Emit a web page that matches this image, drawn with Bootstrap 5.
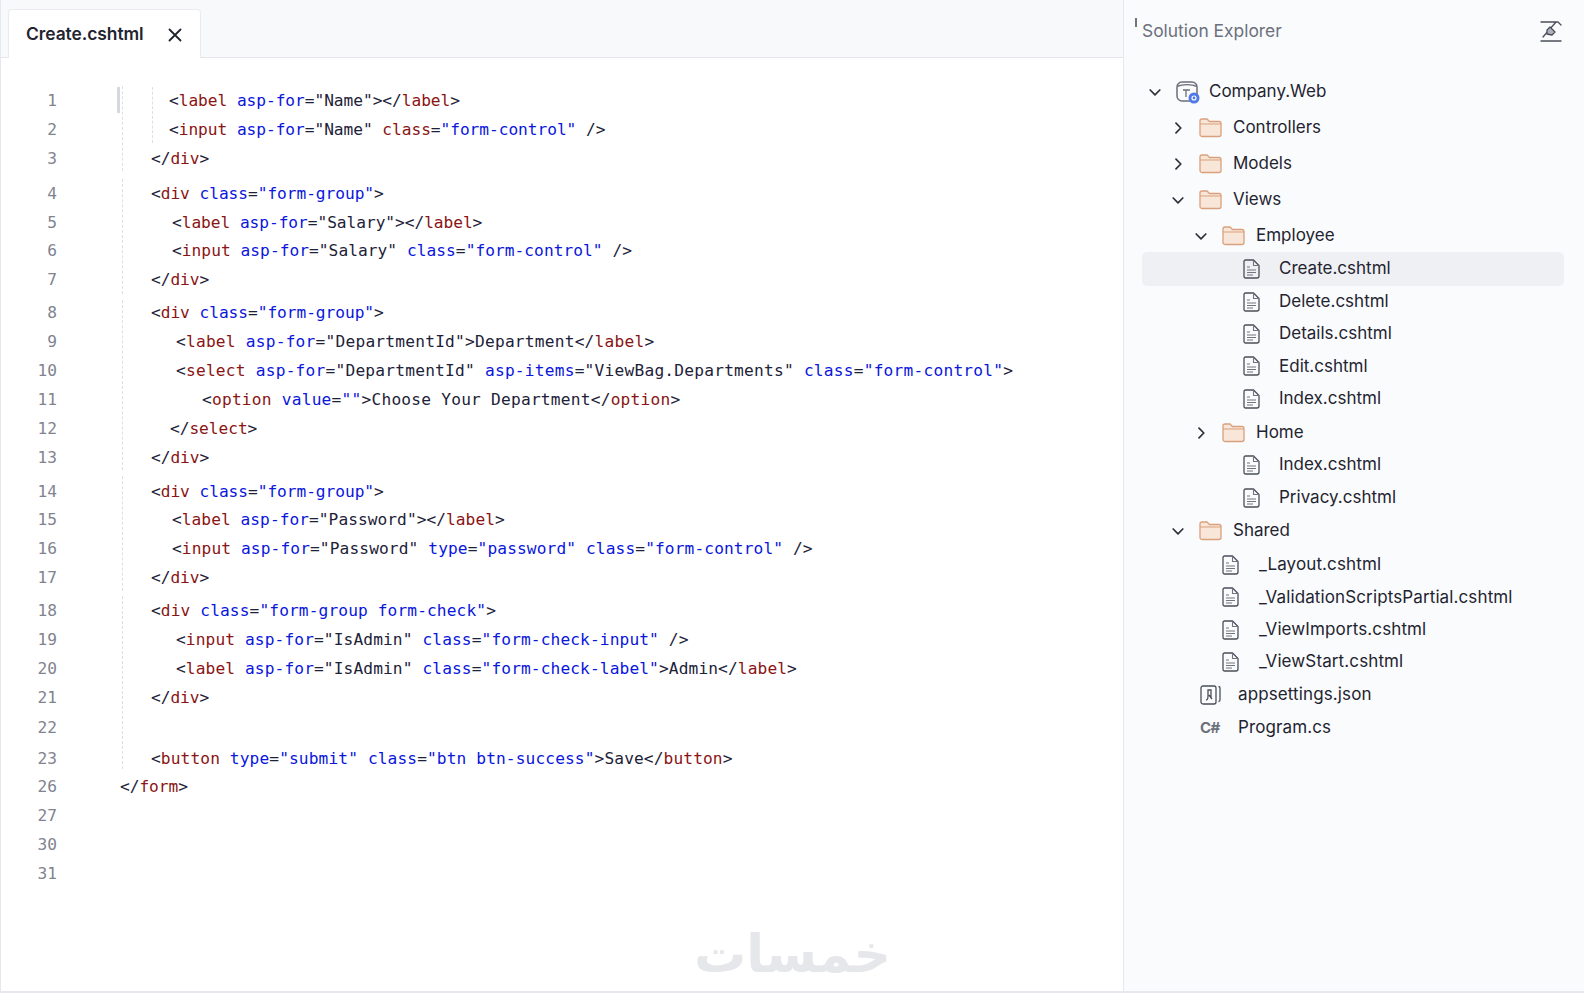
<!DOCTYPE html>
<html lang="en">
<head>
    <meta charset="UTF-8">
    <meta name="viewport" content="width=device-width, initial-scale=1.0">
    <title>Create.cshtml</title>
    <link href="https://cdn.jsdelivr.net/npm/bootstrap@5.3.0/dist/css/bootstrap.min.css" rel="stylesheet">
    <script src="https://cdn.jsdelivr.net/npm/bootstrap@5.3.0/dist/js/bootstrap.bundle.min.js"></script>
    <style>
        html, body { height: 100%; }
        body { background: #fff; font-family: Inter, "Liberation Sans", sans-serif; color: #1f2430; overflow: hidden; }
        .ide { height: 993px; border-left: 1px solid #e6e8ee; border-bottom: 2px solid #e6e8ee; }
        .editor-pane { width: 1122px; position: relative; }
        .tab-strip { height: 58px; background: #f8f9fb; border-bottom: 1px solid #e4e6ec; padding: 9px 0 0 7px; }
        .file-tab { width: 193px; height: 49px; background: #fff; border: 1px solid #e9ebf0; border-bottom: 0; border-radius: 4px 4px 0 0; padding: 1px 18px 0 17px; font-size: 17.4px; font-weight: 600; letter-spacing: -.05px; }
        .code-area { padding-top: 29px; position: relative; font-family: "DejaVu Sans Mono", "Liberation Mono", monospace; font-size: 16.2px; }
        .code-row { height: 28.9px; line-height: 28.9px; white-space: pre; color: #1d2238; letter-spacing: -.05px; }
        .gap-a { margin-top: 6px; }
        .gap-b { margin-top: 4px; }
        .gap-c { margin-top: 5px; }
        .gap-d { margin-top: 1px; }
        .gap-e { margin-top: 2px; }
        .line-no { width: 56px; text-align: right; color: #7f8490; flex: none; letter-spacing: 0; }
        .line-code { padding-left: 94px; }
        .t { color: #8a1414; }
        .a { color: #0a16dc; }
        .in-1 { padding-left: 112px; }
        .in-2 { padding-left: 115px; }
        .in-3 { padding-left: 119px; }
        .in-4 { padding-left: 145px; }
        .in-5 { padding-left: 113px; }
        .in-0 { padding-left: 63px; }
        .ls-1 { letter-spacing: .04px; }
        .ls-2 { letter-spacing: .11px; }
        .ls-3 { letter-spacing: .22px; }
        .guide { position: absolute; border-left: 1px dashed #dcdfe5; }
        .guide-a { left: 121px; }
        .guide-b { left: 151px; top: 29px; height: 56px; }
        .seg-1 { top: 28px; height: 85px; }
        .seg-2 { top: 121px; height: 115px; }
        .seg-3 { top: 242px; height: 170px; }
        .seg-4 { top: 418px; height: 115px; }
        .seg-5 { top: 538px; height: 173px; }
        .guide-bar { position: absolute; left: 116px; top: 29px; width: 3px; height: 26px; background: #d5d8de; }
        .brand-mark { position: absolute; left: 693px; bottom: 2px; font-family: "DejaVu Sans", sans-serif; font-weight: 700; font-size: 52px; line-height: 70px; color: #e6e7ea; direction: rtl; }
        .explorer { width: 461px; flex: none; background: #fafbfd; border-left: 1px solid #e6e8ee; }
        .explorer-head { height: 62px; padding: 0 21px 0 18px; color: #6c717c; font-size: 17.4px; position: relative; }
        .head-tick { position: absolute; left: 11px; top: 18px; width: 2px; height: 9px; background: #70757f; }
        .tree { padding: 12px 20px 0 18px; font-size: 17px; }
        .tree-row { height: 36px; }
        .tree-row svg { flex: none; }
        .file-row { height: 32.4px; }
        .selected-row { background: #eff0f4; border-radius: 5px; height: 34px; margin-top: -2.5px; }
        .home-row { margin-top: 1.5px; }
        .shared-row { margin-top: -1px; }
        .program-row { margin-top: 1px; }
        .chev { width: 12px; height: 12px; margin-right: 15px; }
        .lvl-0 { padding-left: 7px; }
        .lvl-1 { padding-left: 30px; }
        .lvl-2 { padding-left: 53px; }
        .lvl-3 { padding-left: 101px; }
        .lvl-s { padding-left: 80px; letter-spacing: .12px; }
        .lvl-r { padding-left: 58px; letter-spacing: .12px; }
        .folder-name { margin-left: 11px; }
        .file-name { margin-left: 19px; }
        .file-name-s { margin-left: 20px; }
        .file-name-r { margin-left: 17px; }
        .root-name { margin-left: 9px; }
        .cs-badge { width: 21px; font-size: 15px; font-weight: 700; color: #6c717c; letter-spacing: -.5px; }
    </style>
</head>
<body>
    <svg width="0" height="0" class="position-absolute">
        <symbol id="chev-r" viewBox="0 0 12 12"><path d="M4 1.2 8.8 6 4 10.8" fill="none" stroke="#2b303b" stroke-width="1.7" stroke-linecap="round" stroke-linejoin="round"/></symbol>
        <symbol id="chev-d" viewBox="0 0 12 12"><path d="M1.2 4 6 8.8 10.8 4" fill="none" stroke="#2b303b" stroke-width="1.7" stroke-linecap="round" stroke-linejoin="round"/></symbol>
        <symbol id="folder" viewBox="0 0 23 20"><path d="M1 16.5V3a2 2 0 0 1 2-2h5l2.5 2.5H20a2 2 0 0 1 2 2v11a2 2 0 0 1-2 2H3a2 2 0 0 1-2-2Z" fill="#f8e6d8" stroke="#d9a07c" stroke-width="1.3"/><path d="M1 6h21" stroke="#d9a07c" stroke-width="1"/></symbol>
        <symbol id="doc" viewBox="0 0 17 20"><path d="M2.5 1h8L16 6.5V17a2 2 0 0 1-2 2H2.500a1.500 1.500 0 0 1-1.500-1.500v-15A1.500 1.500 0 0 1 2.500 1Z" fill="none" stroke="#4a4f5a" stroke-width="1.300"/><path d="M10.500 1v5.500H16M4 8h3M4 11h9M4 13.500h9M4 16h6" fill="none" stroke="#70757f" stroke-width="1.100"/></symbol>
    </svg>

    <div class="ide d-flex">
        <div class="editor-pane">
            <div class="tab-strip">
                <div class="file-tab d-flex align-items-center justify-content-between">
                    <span>Create.cshtml</span>
                    <svg width="14" height="14" viewBox="0 0 14 14"><path d="M1.500 1.500l11 11M12.500 1.500l-11 11" stroke="#20242e" stroke-width="1.800" stroke-linecap="round"/></svg>
                </div>
            </div>
            <div class="code-area">
                <div class="guide-bar"></div>
                <div class="guide guide-a seg-1"></div>
                <div class="guide guide-a seg-2"></div>
                <div class="guide guide-a seg-3"></div>
                <div class="guide guide-a seg-4"></div>
                <div class="guide guide-a seg-5"></div>
                <div class="guide guide-b"></div>

                <div class="code-row d-flex"><span class="line-no">1</span><span class="in-1">&lt;<span class="t">label</span> <span class="a">asp-for</span>="Name"&gt;&lt;/<span class="t">label</span>&gt;</span></div>
                <div class="code-row d-flex"><span class="line-no">2</span><span class="in-1">&lt;<span class="t">input</span> <span class="a">asp-for</span>="Name" <span class="t">class</span>=<span class="a">"form-control"</span> /&gt;</span></div>
                <div class="code-row d-flex"><span class="line-no">3</span><span class="line-code">&lt;/<span class="t">div</span>&gt;</span></div>

                <div class="code-row d-flex gap-a"><span class="line-no">4</span><span class="line-code">&lt;<span class="t">div</span> <span class="a">class</span>=<span class="a">"form-group"</span>&gt;</span></div>
                <div class="code-row d-flex"><span class="line-no">5</span><span class="in-2">&lt;<span class="t">label</span> <span class="a">asp-for</span>="Salary"&gt;&lt;/<span class="t">label</span>&gt;</span></div>
                <div class="code-row d-flex"><span class="line-no">6</span><span class="in-2 ls-1">&lt;<span class="t">input</span> <span class="a">asp-for</span>="Salary" <span class="a">class</span>=<span class="a">"form-control"</span> /&gt;</span></div>
                <div class="code-row d-flex"><span class="line-no">7</span><span class="line-code">&lt;/<span class="t">div</span>&gt;</span></div>

                <div class="code-row d-flex gap-b"><span class="line-no">8</span><span class="line-code">&lt;<span class="t">div</span> <span class="a">class</span>=<span class="a">"form-group"</span>&gt;</span></div>
                <div class="code-row d-flex"><span class="line-no">9</span><span class="in-3 ls-3">&lt;<span class="t">label</span> <span class="a">asp-for</span>="DepartmentId"&gt;Department&lt;/<span class="t">label</span>&gt;</span></div>
                <div class="code-row d-flex"><span class="line-no">10</span><span class="in-3 ls-3">&lt;<span class="t">select</span> <span class="a">asp-for</span>="DepartmentId" <span class="a">asp-items</span>="ViewBag.Departments" <span class="a">class</span>=<span class="a">"form-control"</span>&gt;</span></div>
                <div class="code-row d-flex"><span class="line-no">11</span><span class="in-4 ls-3">&lt;<span class="t">option</span> <span class="a">value</span>=<span class="a">""</span>&gt;Choose Your Department&lt;/<span class="t">option</span>&gt;</span></div>
                <div class="code-row d-flex"><span class="line-no">12</span><span class="in-5">&lt;/<span class="t">select</span>&gt;</span></div>
                <div class="code-row d-flex"><span class="line-no">13</span><span class="line-code">&lt;/<span class="t">div</span>&gt;</span></div>

                <div class="code-row d-flex gap-c"><span class="line-no">14</span><span class="line-code">&lt;<span class="t">div</span> <span class="a">class</span>=<span class="a">"form-group"</span>&gt;</span></div>
                <div class="code-row d-flex"><span class="line-no">15</span><span class="in-2 ls-1">&lt;<span class="t">label</span> <span class="a">asp-for</span>="Password"&gt;&lt;/<span class="t">label</span>&gt;</span></div>
                <div class="code-row d-flex"><span class="line-no">16</span><span class="in-2 ls-2">&lt;<span class="t">input</span> <span class="a">asp-for</span>="Password" <span class="a">type</span>=<span class="a">"password"</span> <span class="a">class</span>=<span class="a">"form-control"</span> /&gt;</span></div>
                <div class="code-row d-flex"><span class="line-no">17</span><span class="line-code">&lt;/<span class="t">div</span>&gt;</span></div>

                <div class="code-row d-flex gap-b"><span class="line-no">18</span><span class="line-code ls-2">&lt;<span class="t">div</span> <span class="a">class</span>=<span class="a">"form-group form-check"</span>&gt;</span></div>
                <div class="code-row d-flex"><span class="line-no">19</span><span class="in-3 ls-2">&lt;<span class="t">input</span> <span class="a">asp-for</span>="IsAdmin" <span class="a">class</span>=<span class="a">"form-check-input"</span> /&gt;</span></div>
                <div class="code-row d-flex"><span class="line-no">20</span><span class="in-3 ls-2">&lt;<span class="t">label</span> <span class="a">asp-for</span>="IsAdmin" <span class="a">class</span>=<span class="a">"form-check-label"</span>&gt;Admin&lt;/<span class="t">label</span>&gt;</span></div>
                <div class="code-row d-flex"><span class="line-no">21</span><span class="line-code">&lt;/<span class="t">div</span>&gt;</span></div>

                <div class="code-row d-flex gap-d"><span class="line-no">22</span></div>
                <div class="code-row d-flex gap-e"><span class="line-no">23</span><span class="line-code ls-2">&lt;<span class="t">button</span> <span class="a">type</span>=<span class="a">"submit"</span> <span class="a">class</span>=<span class="a">"btn btn-success"</span>&gt;Save&lt;/<span class="t">button</span>&gt;</span></div>
                <div class="code-row d-flex"><span class="line-no">26</span><span class="in-0">&lt;/<span class="t">form</span>&gt;</span></div>
                <div class="code-row d-flex"><span class="line-no">27</span></div>
                <div class="code-row d-flex"><span class="line-no">30</span></div>
                <div class="code-row d-flex"><span class="line-no">31</span></div>
            </div>
            <div class="brand-mark">خمسات</div>
        </div>

        <div class="explorer">
            <div class="explorer-head d-flex align-items-center justify-content-between">
                <span class="head-tick"></span>
                <span>Solution Explorer</span>
                <svg width="24" height="24" viewBox="0 0 24 24" fill="none" stroke="#4a4f5a" stroke-width="1.300" stroke-linecap="round" stroke-linejoin="round"><path d="M2 3h17l3 3M2 22h20M17 3 4 18"/><path d="M11 8l5 5-3 3-5-1 0-4Z" fill="#aeb2ba"/></svg>
            </div>
            <div class="tree">
                <div class="tree-row d-flex align-items-center lvl-0">
                    <svg class="chev"><use href="#chev-d"/></svg>
                    <svg width="24" height="24" viewBox="0 0 24 24" fill="none"><rect x="1" y="2" width="20" height="19" rx="5" stroke="#6a6f7a" stroke-width="1.500"/><path d="M1.500 6.500C6 4 16 4 20.500 6.500M7 10h7M10 10v7" stroke="#6a6f7a" stroke-width="1.300"/><circle cx="18" cy="18" r="5.500" fill="#4f79e8"/><circle cx="18" cy="18" r="2" fill="none" stroke="#fff" stroke-width="1.200"/></svg>
                    <span class="root-name">Company.Web</span>
                </div>
                <div class="tree-row d-flex align-items-center lvl-1"><svg class="chev"><use href="#chev-r"/></svg><svg width="23" height="20"><use href="#folder"/></svg><span class="folder-name">Controllers</span></div>
                <div class="tree-row d-flex align-items-center lvl-1"><svg class="chev"><use href="#chev-r"/></svg><svg width="23" height="20"><use href="#folder"/></svg><span class="folder-name">Models</span></div>
                <div class="tree-row d-flex align-items-center lvl-1"><svg class="chev"><use href="#chev-d"/></svg><svg width="23" height="20"><use href="#folder"/></svg><span class="folder-name">Views</span></div>
                <div class="tree-row d-flex align-items-center lvl-2"><svg class="chev"><use href="#chev-d"/></svg><svg width="23" height="20"><use href="#folder"/></svg><span class="folder-name">Employee</span></div>
                <div class="selected-row d-flex align-items-center lvl-3"><svg width="17" height="20"><use href="#doc"/></svg><span class="file-name">Create.cshtml</span></div>
                <div class="file-row d-flex align-items-center lvl-3"><svg width="17" height="20"><use href="#doc"/></svg><span class="file-name">Delete.cshtml</span></div>
                <div class="file-row d-flex align-items-center lvl-3"><svg width="17" height="20"><use href="#doc"/></svg><span class="file-name">Details.cshtml</span></div>
                <div class="file-row d-flex align-items-center lvl-3"><svg width="17" height="20"><use href="#doc"/></svg><span class="file-name">Edit.cshtml</span></div>
                <div class="file-row d-flex align-items-center lvl-3"><svg width="17" height="20"><use href="#doc"/></svg><span class="file-name">Index.cshtml</span></div>
                <div class="file-row home-row d-flex align-items-center lvl-2"><svg class="chev"><use href="#chev-r"/></svg><svg width="23" height="20"><use href="#folder"/></svg><span class="folder-name">Home</span></div>
                <div class="file-row d-flex align-items-center lvl-3"><svg width="17" height="20"><use href="#doc"/></svg><span class="file-name">Index.cshtml</span></div>
                <div class="file-row d-flex align-items-center lvl-3"><svg width="17" height="20"><use href="#doc"/></svg><span class="file-name">Privacy.cshtml</span></div>
                <div class="tree-row shared-row d-flex align-items-center lvl-1"><svg class="chev"><use href="#chev-d"/></svg><svg width="23" height="20"><use href="#folder"/></svg><span class="folder-name">Shared</span></div>
                <div class="file-row d-flex align-items-center lvl-s"><svg width="17" height="20"><use href="#doc"/></svg><span class="file-name-s">_Layout.cshtml</span></div>
                <div class="file-row d-flex align-items-center lvl-s"><svg width="17" height="20"><use href="#doc"/></svg><span class="file-name-s">_ValidationScriptsPartial.cshtml</span></div>
                <div class="file-row d-flex align-items-center lvl-s"><svg width="17" height="20"><use href="#doc"/></svg><span class="file-name-s">_ViewImports.cshtml</span></div>
                <div class="file-row d-flex align-items-center lvl-s"><svg width="17" height="20"><use href="#doc"/></svg><span class="file-name-s">_ViewStart.cshtml</span></div>
                <div class="file-row d-flex align-items-center lvl-r"><svg width="21" height="21" viewBox="0 0 21 21" fill="none" stroke="#4a4f5a" stroke-width="1.300"><rect x="1" y="2" width="15" height="18" rx="2"/><path d="M18.500 2.500a1.500 1.500 0 0 1 1.500 1.500v12a1.500 1.500 0 0 1-1.500 1.500M6 16c2 0 2-2 2-4V6h3v8M9 11l3 4"/></svg><span class="file-name-r">appsettings.json</span></div>
                <div class="file-row program-row d-flex align-items-center lvl-r"><span class="cs-badge">C#</span><span class="file-name-r">Program.cs</span></div>
            </div>
        </div>
    </div>
</body>
</html>
